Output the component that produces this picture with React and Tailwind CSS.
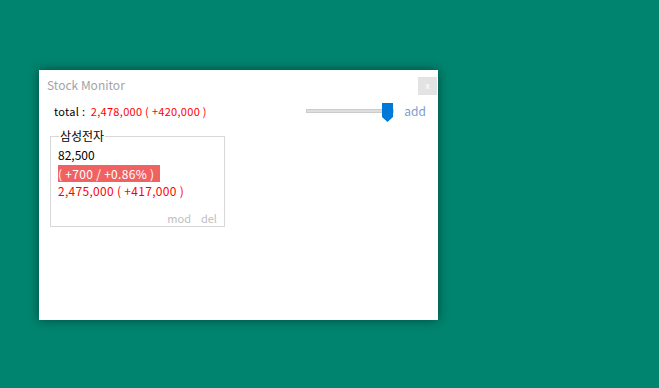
import React from "react";

function Slider() {
  return (
    <div className="relative w-[88px] h-[18px] flex items-center">
      <div className="w-full h-[4px] bg-[#dcdfdc] border border-[#c9cdc9]" />
      <svg
        className="absolute left-[76px] top-[1px]"
        width="11"
        height="19"
        viewBox="0 0 11 19"
      >
        <path d="M0 0H11V14L5.5 19L0 14Z" fill="#0078d7" />
      </svg>
    </div>
  );
}

export default function App() {
  return (
    <div
      className="w-[659px] h-[388px] bg-[#00846f] pt-[70px] pl-[39px]"
      style={{ fontFamily: '"Noto Sans CJK KR", "DejaVu Sans", sans-serif' }}
    >
      <div className="w-[399px] h-[250px] bg-white shadow-[0_0_10px_rgba(0,0,0,0.45)] flex flex-col">
        {/* title bar */}
        <div className="flex items-start justify-between h-[31px] pl-[8px] pr-[1px] pt-[7px]">
          <span className="text-[12px] leading-[16px] text-[#a3a3a8]">Stock Monitor</span>
          <button className="w-[19px] h-[18px] bg-[#e3e3e3] text-white text-[9px] leading-[18px]">
            x
          </button>
        </div>

        {/* total + slider */}
        <div className="flex items-center justify-between pl-[15px] pr-[12px] h-[20px]">
          <div className="text-[11px] leading-[14px] tracking-[0.3px]">
            <span className="text-black">total :&nbsp; </span>
            <span className="text-[#ff0000]">2,478,000 ( +420,000 )</span>
          </div>
          <div className="flex items-center gap-[10px]">
            <Slider />
            <span className="text-[12px] text-[#7d9ec8]">add</span>
          </div>
        </div>

        {/* stock card */}
        <fieldset className="ml-[11px] mt-[8px] w-[175px] h-[98px] border border-[#d8d8d8] px-[7px] pt-0 pb-[3px]">
          <legend className="ml-[1px] px-[1px] text-[12px] leading-[14px] text-black">삼성전자</legend>
          <div className="text-[12px] leading-[18px] text-black mt-[3px]">82,500</div>
          <div className="text-[12px] leading-[14px] mt-[3px]">
            <span className="bg-[#f06262] text-white pr-[6px] tracking-[0.3px]">( +700 / +0.86% )</span>
          </div>
          <div className="text-[12px] leading-[18px] text-[#ff0000] mt-[1px] tracking-[0.3px]">2,475,000 ( +417,000 )</div>
          <div className="flex justify-end gap-[10px] text-[11px] leading-[14px] text-[#c0c0c0] mt-[11px]">
            <span>mod</span>
            <span>del</span>
          </div>
        </fieldset>
      </div>
    </div>
  );
}
